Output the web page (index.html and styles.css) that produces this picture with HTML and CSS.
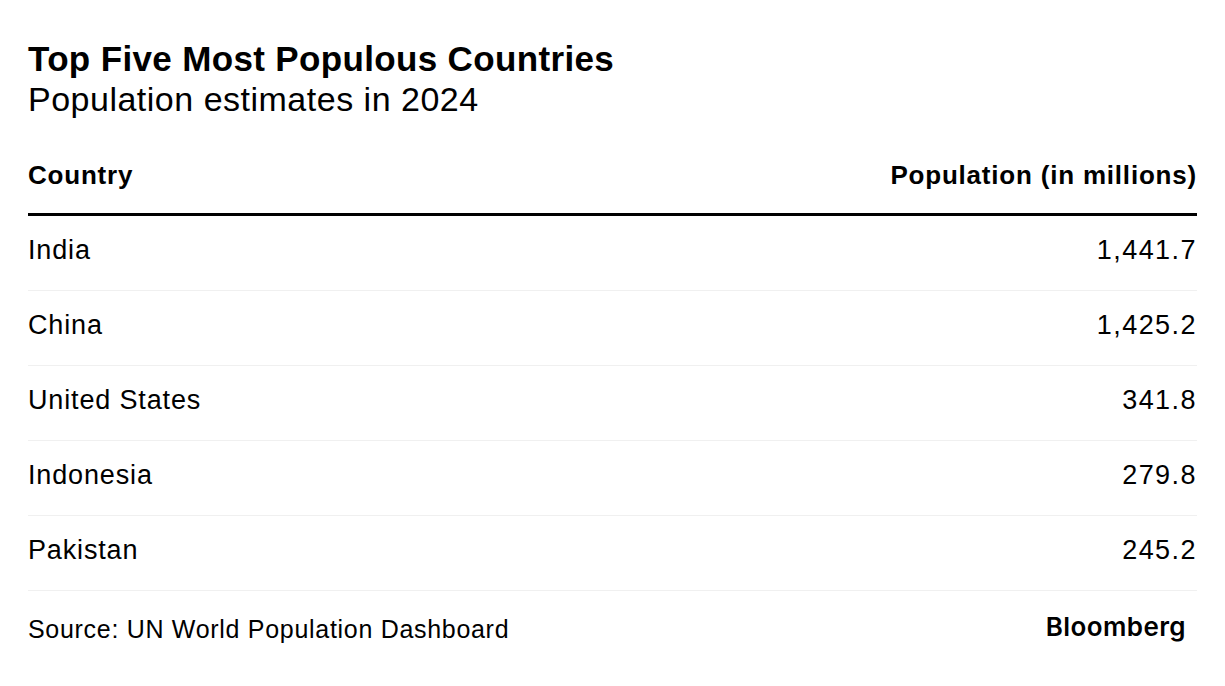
FILE: index.html
```html
<!DOCTYPE html>
<html lang="en">
<head>
<meta charset="utf-8">
<title>Top Five Most Populous Countries</title>
<link rel="stylesheet" href="styles.css">
</head>
<body>
<div class="chart">
  <header class="head">
    <h1 class="title">Top Five Most Populous Countries</h1>
    <p class="subtitle">Population estimates in 2024</p>
  </header>
  <table class="table">
    <thead>
      <tr><th class="c-name">Country</th><th class="c-num">Population (in millions)</th></tr>
    </thead>
    <tbody>
      <tr><td class="c-name">India</td><td class="c-num">1,441.7</td></tr>
      <tr><td class="c-name">China</td><td class="c-num">1,425.2</td></tr>
      <tr><td class="c-name">United States</td><td class="c-num">341.8</td></tr>
      <tr><td class="c-name">Indonesia</td><td class="c-num">279.8</td></tr>
      <tr><td class="c-name">Pakistan</td><td class="c-num">245.2</td></tr>
    </tbody>
  </table>
  <footer class="foot">
    <span class="source">Source: UN World Population Dashboard</span>
    <span class="logo">Bloomberg</span>
  </footer>
</div>
</body>
</html>
```
FILE: styles.css
```css
* { box-sizing: border-box; }
body {
  margin: 0;
  background: #fff;
  color: #000;
  font-family: "Liberation Sans", Arial, sans-serif;
}
.chart {
  padding: 39px 28px 0 28px;
}
.title {
  margin: 0;
  font-size: 35px;
  line-height: 40px;
  font-weight: 700;
  letter-spacing: 0.35px;
}
.subtitle {
  margin: 0;
  font-size: 34px;
  line-height: 40px;
  font-weight: 400;
  letter-spacing: 0.5px;
}
.table {
  width: 100%;
  border-collapse: collapse;
  margin-top: 41px;
}
.table th {
  font-size: 26px;
  font-weight: 700;
  letter-spacing: 0.8px;
  padding: 0 0 23px 0;
  line-height: 30px;
  border-bottom: 3px solid #000;
}
.table td {
  font-size: 27px;
  line-height: 30px;
  letter-spacing: 0.85px;
  padding: 19px 0 25px 0;
  border-bottom: 1px solid #f0f0f0;
  height: 75px;
}
.table td.c-num { letter-spacing: 1.45px; }
.c-name { text-align: left; }
.c-num { text-align: right; }
.foot {
  display: flex;
  justify-content: space-between;
  align-items: center;
  padding-top: 24px;
}
.source {
  font-size: 25px;
  letter-spacing: 0.7px;
}
.logo {
  font-family: "Inter", "Liberation Sans", sans-serif;
  font-weight: 600;
  font-size: 26px;
  letter-spacing: 0.4px;
  margin-right: 11px;
  margin-top: -6px;
}
```
